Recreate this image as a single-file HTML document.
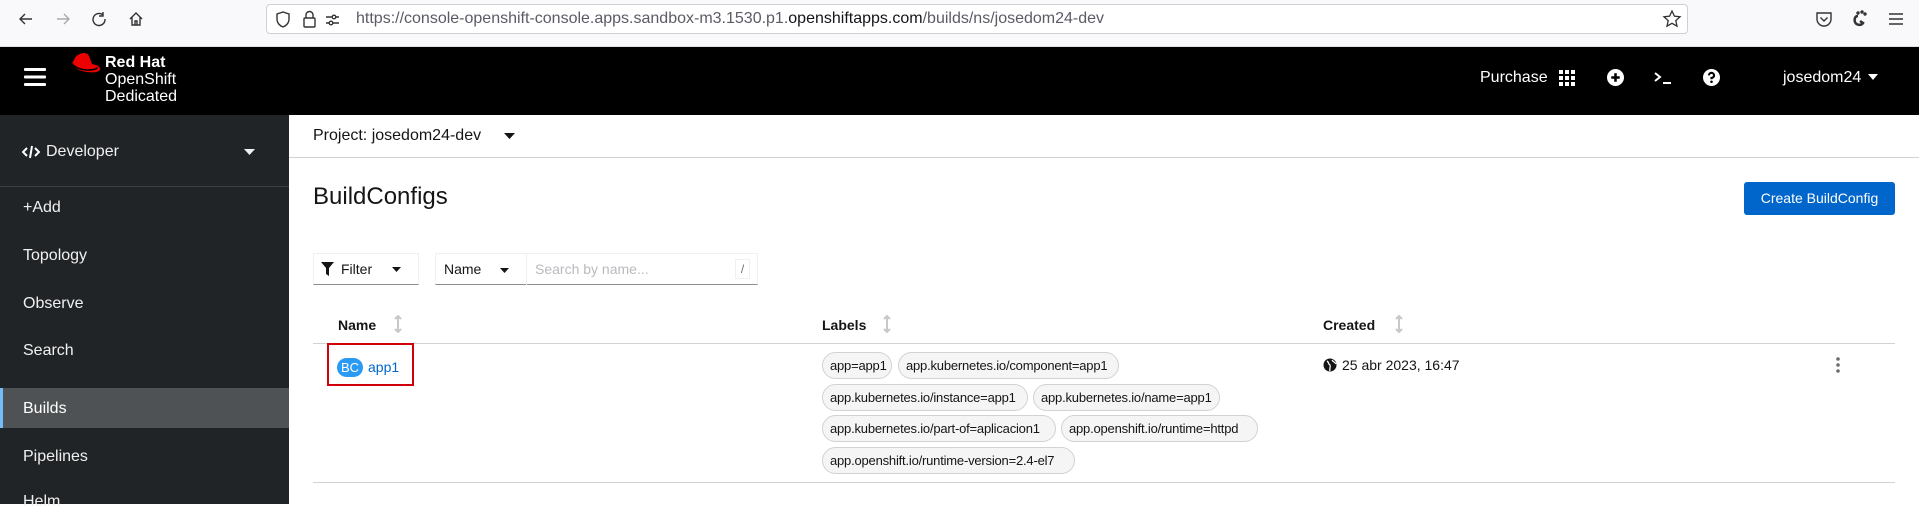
<!DOCTYPE html>
<html><head><meta charset="utf-8"><style>
*{box-sizing:border-box;margin:0;padding:0}
body{width:1919px;height:504px;overflow:hidden;position:relative;font-family:"Liberation Sans",sans-serif;background:#fff;color:#151515}
.a{position:absolute}
.tb{left:0;top:0;width:1919px;height:47px;background:#f9f9fb;border-bottom:1px solid #e0e0e6}
.url{left:266px;top:4px;width:1422px;height:30px;background:#fff;border:1px solid #cfcfd8;border-radius:4px}
.mh{left:0;top:47px;width:1919px;height:68px;background:#000}
.sb{left:0;top:115px;width:289px;height:389px;background:#212427}
.nav{position:absolute;left:23px;color:#f0f0f0;font-size:16px;line-height:20px}
.chip{position:absolute;height:27px;border:1px solid #d2d2d2;border-radius:14px;background:#f5f5f5;font-size:13px;line-height:25px;padding:0 7px;white-space:nowrap;color:#151515;letter-spacing:-0.2px;overflow:hidden}
.th{position:absolute;top:316px;font-size:14px;font-weight:bold;line-height:18px}
.sort{position:absolute;top:315px}
.w{color:#fff}
</style></head><body>
<div class="a tb"></div>
<svg class="a" style="left:16px;top:9px" width="130" height="20" viewBox="0 0 130 20" fill="none" stroke="#333" stroke-width="1.4">
<path d="M16 10H4M9 5L4 10L9 15"/>
<path d="M41 10H53M48 5L53 10L48 15" stroke="#aaa"/>
<path d="M87 6A6 6 0 1 0 89 10M87 3V7H83"/>
<path d="M114 10L120 4L126 10M116 8V16H124V8M119 16V12H121V16"/>
</svg>
<div class="a url"></div>
<svg class="a" style="left:274px;top:10px" width="80" height="20" viewBox="0 0 80 20" fill="none" stroke="#333" stroke-width="1.4">
<path d="M9 2L3 4V9C3 13 6 16 9 17C12 16 15 13 15 9V4Z"/>
<rect x="30" y="8" width="11" height="9" rx="1"/><path d="M32 8V5A3.5 3.5 0 0 1 39 5V8"/>
<path d="M52 7H58M62 7H65M52 13H55M59 13H65"/><circle cx="60" cy="7" r="1.8"/><circle cx="57" cy="13" r="1.8"/>
</svg>
<div class="a" style="left:356px;top:9px;font-size:16px;color:#5b5b66;line-height:20px;white-space:nowrap">https://console-openshift-console.apps.sandbox-m3.1530.p1.<span style="color:#15141a">openshiftapps.com</span>/builds/ns/josedom24-dev</div>
<svg class="a" style="left:1662px;top:9px" width="20" height="20" viewBox="0 0 20 20"><path d="M10 2L12.4 7.2L18 7.8L13.8 11.6L15 17.2L10 14.3L5 17.2L6.2 11.6L2 7.8L7.6 7.2Z" fill="none" stroke="#333" stroke-width="1.3"/></svg>
<svg class="a" style="left:1814px;top:9px" width="100" height="20" viewBox="0 0 100 20" fill="none" stroke="#333" stroke-width="1.4">
<path d="M3 4H17V10A7 7 0 0 1 3 10Z"/><path d="M6.5 8.5L10 12L13.5 8.5"/>
<path d="M44 7C41 7 40 10 41 13C42 16 47 17 49 14L46 12" stroke-width="2.5"/><circle cx="44" cy="4" r="1" fill="#333"/><circle cx="48" cy="3" r="1" fill="#333"/><circle cx="51" cy="5" r="1" fill="#333"/>
<path d="M75 5H89M75 10H89M75 15H89"/>
</svg>
<div class="a mh"></div>
<svg class="a" style="left:24px;top:68px" width="22" height="18" viewBox="0 0 22 18" fill="#fff"><rect y="0" width="22" height="3" rx="1"/><rect y="7.5" width="22" height="3" rx="1"/><rect y="15" width="22" height="3" rx="1"/></svg>
<svg class="a" style="left:70px;top:52px" width="32" height="24" viewBox="0 0 32 24"><path d="M10 2C13 0 18 1 19 4L22 12C26 13 30 14 30 17C30 20 24 21 17 20C9 19 2 15 2 11L4 8C5 5 7 3 10 2Z" fill="#e00"/><path d="M2 11C3 15 11 18 18 18C24 18 27 17 27 15.5" fill="none" stroke="#000" stroke-width="1.6"/></svg>
<div class="a w" style="left:105px;top:54px;font-size:16px;font-weight:bold;line-height:18px">Red Hat</div>
<div class="a w" style="left:105px;top:71px;font-size:16px;line-height:18px">OpenShift</div>
<div class="a w" style="left:105px;top:88px;font-size:16px;line-height:18px">Dedicated</div>
<div class="a w" style="left:1480px;top:68px;font-size:16px;line-height:20px">Purchase</div>
<svg class="a" style="left:1559px;top:70px" width="16" height="16" viewBox="0 0 16 16" fill="#fff"><rect x="0" y="0" width="4" height="4"/><rect x="6" y="0" width="4" height="4"/><rect x="12" y="0" width="4" height="4"/><rect x="0" y="6" width="4" height="4"/><rect x="6" y="6" width="4" height="4"/><rect x="12" y="6" width="4" height="4"/><rect x="0" y="12" width="4" height="4"/><rect x="6" y="12" width="4" height="4"/><rect x="12" y="12" width="4" height="4"/></svg>
<svg class="a" style="left:1607px;top:69px" width="17" height="17" viewBox="0 0 16 16"><circle cx="8" cy="8" r="8" fill="#fff"/><path d="M8 4V12M4 8H12" stroke="#000" stroke-width="2.4"/></svg>
<svg class="a" style="left:1654px;top:70px" width="18" height="16" viewBox="0 0 18 16" fill="none" stroke="#fff" stroke-width="2"><path d="M1 3L6 7L1 11"/><path d="M9 13H17"/></svg>
<svg class="a" style="left:1703px;top:69px" width="17" height="17" viewBox="0 0 16 16"><circle cx="8" cy="8" r="8" fill="#fff"/><path d="M5.6 6A2.4 2.4 0 1 1 8 8.4V9.6" fill="none" stroke="#000" stroke-width="2"/><circle cx="8" cy="12" r="1.2" fill="#000"/></svg>
<div class="a w" style="left:1783px;top:68px;font-size:16px;line-height:20px">josedom24</div>
<svg class="a" style="left:1868px;top:74px" width="10" height="6"><path d="M0 0H10L5 6Z" fill="#fff"/></svg>

<div class="a sb"></div>
<svg class="a" style="left:22px;top:145px" width="18" height="14" viewBox="0 0 18 14" fill="none" stroke="#fff" stroke-width="2"><path d="M5 3L1 7L5 11M13 3L17 7L13 11"/><path d="M10 1L8 13"/></svg>
<div class="nav" style="left:46px;top:142px;font-size:16px">Developer</div>
<svg class="a" style="left:244px;top:149px" width="11" height="6"><path d="M0 0H11L5.5 6Z" fill="#f0f0f0"/></svg>
<div class="a" style="left:0;top:186px;width:289px;height:1px;background:#3c3f42"></div>
<div class="nav" style="top:198px">+Add</div>
<div class="nav" style="top:246px">Topology</div>
<div class="nav" style="top:294px">Observe</div>
<div class="nav" style="top:341px">Search</div>
<div class="a" style="left:0;top:388px;width:289px;height:40px;background:#4f5255"></div>
<div class="a" style="left:0;top:388px;width:3px;height:40px;background:#73bcf7"></div>
<div class="nav" style="top:399px;color:#fff">Builds</div>
<div class="nav" style="top:447px">Pipelines</div>
<div class="nav" style="top:492px">Helm</div>

<div class="a" style="left:313px;top:126px;font-size:16px;line-height:20px">Project: josedom24-dev</div>
<svg class="a" style="left:504px;top:133px" width="11" height="6"><path d="M0 0H11L5.5 6Z" fill="#151515"/></svg>
<div class="a" style="left:289px;top:157px;width:1630px;height:1px;background:#d2d2d2"></div>
<div class="a" style="left:313px;top:183px;font-size:24px;line-height:28px">BuildConfigs</div>
<div class="a" style="left:1744px;top:182px;width:151px;height:33px;background:#0066cc;border-radius:3px;color:#fff;font-size:14px;line-height:33px;text-align:center">Create BuildConfig</div>

<div class="a" style="left:313px;top:253px;width:106px;height:32px;border:1px solid #f0f0f0;border-bottom:1px solid #8a8d90"></div>
<svg class="a" style="left:321px;top:262px" width="13" height="14" viewBox="0 0 13 14"><path d="M0 0H13L8 6V14L5 12V6Z" fill="#151515"/></svg>
<div class="a" style="left:341px;top:259px;font-size:14px;line-height:20px">Filter</div>
<svg class="a" style="left:392px;top:267px" width="9" height="5"><path d="M0 0H9L4.5 5Z" fill="#151515"/></svg>
<div class="a" style="left:435px;top:253px;width:323px;height:32px;border:1px solid #f0f0f0;border-bottom:1px solid #8a8d90"></div>
<div class="a" style="left:526px;top:253px;width:1px;height:32px;background:#f0f0f0"></div>
<div class="a" style="left:444px;top:259px;font-size:14px;line-height:20px">Name</div>
<svg class="a" style="left:500px;top:268px" width="9" height="5"><path d="M0 0H9L4.5 5Z" fill="#151515"/></svg>
<div class="a" style="left:535px;top:259px;font-size:14px;line-height:20px;color:#b8bbbe">Search by name...</div>
<div class="a" style="left:735px;top:259px;width:15px;height:20px;border:1px solid #f0f0f0;font-size:12px;line-height:18px;text-align:center;color:#6a6e73">/</div>

<div class="th" style="left:338px">Name</div>
<div class="th" style="left:822px">Labels</div>
<div class="th" style="left:1323px">Created</div>
<svg class="sort" style="left:394px" width="8" height="18" viewBox="0 0 8 18"><path d="M4 1V17M1 4L4 1L7 4M1 14L4 17L7 14" fill="none" stroke="#c8c8c8" stroke-width="2"/></svg>
<svg class="sort" style="left:883px" width="8" height="18" viewBox="0 0 8 18"><path d="M4 1V17M1 4L4 1L7 4M1 14L4 17L7 14" fill="none" stroke="#c8c8c8" stroke-width="2"/></svg>
<svg class="sort" style="left:1395px" width="8" height="18" viewBox="0 0 8 18"><path d="M4 1V17M1 4L4 1L7 4M1 14L4 17L7 14" fill="none" stroke="#c8c8c8" stroke-width="2"/></svg>
<div class="a" style="left:313px;top:343px;width:1582px;height:1px;background:#d2d2d2"></div>
<div class="a" style="left:313px;top:482px;width:1582px;height:1px;background:#d2d2d2"></div>

<div class="a" style="left:327px;top:343px;width:87px;height:43px;border:2px solid #d0000a"></div>
<div class="a" style="left:337px;top:358px;width:26px;height:19px;border-radius:10px;background:#2b9af3;color:#fff;font-size:13px;line-height:19px;text-align:center">BC</div>
<div class="a" style="left:368px;top:358px;font-size:14px;line-height:19px;color:#0066cc">app1</div>

<div class="chip" style="left:822px;top:352px;width:70px">app=app1</div>
<div class="chip" style="left:898px;top:352px;width:221px">app.kubernetes.io/component=app1</div>
<div class="chip" style="left:822px;top:384px;width:206px">app.kubernetes.io/instance=app1</div>
<div class="chip" style="left:1033px;top:384px;width:187px">app.kubernetes.io/name=app1</div>
<div class="chip" style="left:822px;top:415px;width:234px">app.kubernetes.io/part-of=aplicacion1</div>
<div class="chip" style="left:1061px;top:415px;width:197px">app.openshift.io/runtime=httpd</div>
<div class="chip" style="left:822px;top:447px;width:253px">app.openshift.io/runtime-version=2.4-el7</div>

<svg class="a" style="left:1323px;top:358px" width="14" height="14" viewBox="0 0 14 14"><circle cx="7" cy="7" r="6.5" fill="#151515"/><path d="M4 3C6 4 5 6 7 7C8 9 6 11 7 13M9 2C10 4 12 4 13 6" fill="none" stroke="#fff" stroke-width="1.3"/></svg>
<div class="a" style="left:1342px;top:356px;font-size:14px;line-height:18px">25 abr 2023, 16:47</div>
<svg class="a" style="left:1836px;top:357px" width="4" height="16"><circle cx="2" cy="2" r="1.8" fill="#6a6e73"/><circle cx="2" cy="8" r="1.8" fill="#6a6e73"/><circle cx="2" cy="14" r="1.8" fill="#6a6e73"/></svg>
</body></html>
